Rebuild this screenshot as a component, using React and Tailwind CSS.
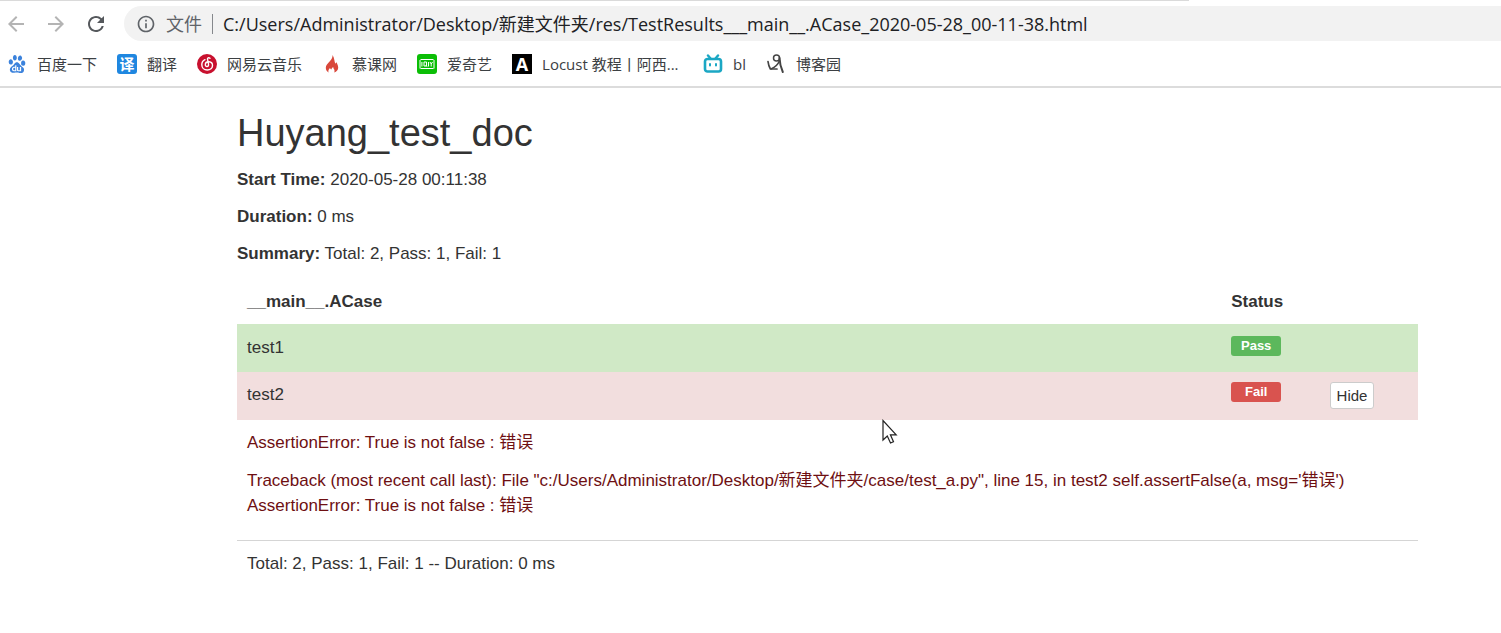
import { useState } from "react";
import { MdArrowBack, MdArrowForward, MdRefresh, MdInfoOutline } from "react-icons/md";
import { SiBaidu } from "react-icons/si";

function TranslateIcon() {
  return (
    <span className="flex size-5 items-center justify-center rounded-[3px] bg-[#1f87e0] text-[15px] leading-5 font-bold text-white">
      译
    </span>
  );
}

function MusicIcon() {
  return (
    <svg viewBox="0 0 20 20" className="size-5" fill="none" stroke="#fff" strokeWidth="1.400" strokeLinecap="round">
      <circle cx="10" cy="10" r="10" fill="#c8102e" stroke="none" />
      <path d="M13 4.300c-1.200-1-2.800-.6-2.500.9l1 5c.3 1.600-.6 2.300-1.500 2.300-1.100 0-1.900-.9-1.700-2.100.2-1.700 1.900-2.700 3.700-2.600 2.200.2 3.600 1.700 3.500 3.800-.1 2.500-2.300 4.400-5.200 4.400-3.200 0-5.500-2.200-5.500-5.200 0-2.300 1.200-4.200 3.200-5.100" />
    </svg>
  );
}

function FlameIcon() {
  return (
    <svg viewBox="0 0 20 20" className="size-5">
      <path d="M10.500 1c.2 2.500-.8 4.200-2.700 6.200C5.600 9.500 3.800 11.300 3.800 13.800c0 2 1 3.700 2.700 4.600-.5-1.800.2-3.200 1.500-4.400.3.800.7 1.200 1.300 1.400.3-1.100 1-1.900 1.900-2.400.1 1.400.9 2 1.200 3 .3.900.1 1.700-.2 2.500 2.600-.8 4-2.700 4-5 0-2.200-1.100-3.600-1.600-5.300-.6.400-1 .9-1.200 1.600C12.300 7.500 12.500 4 10.500 1z" fill="#d9483b" />
    </svg>
  );
}

function VideoIcon() {
  return (
    <svg viewBox="0 0 20 20" className="size-5">
      <rect width="20" height="20" rx="3" fill="#0bbe06" />
      <path d="M3.500 5.500h13M3.500 14.500h13M3 6v8.500M17 6v8.500" stroke="#fff" strokeWidth="1" fill="none" />
      <path d="M4.900 8v4.500M7 8h2.500v4H7zM8.800 11l1.200 1.700M11.500 8v4.500M13 8l1.200 2L15.500 8M14.200 10v2.500" stroke="#fff" strokeWidth="1" fill="none" />
    </svg>
  );
}

function LetterIcon() {
  return (
    <span className="flex size-5 items-center justify-center bg-black text-[18px] leading-5 font-bold text-white">
      A
    </span>
  );
}

function TvIcon() {
  return (
    <svg viewBox="0 0 20 20" className="size-5" fill="none" stroke="#1ba7c4" strokeLinecap="round">
      <rect x="2" y="5" width="16" height="12.500" rx="2.500" strokeWidth="2.600" />
      <path d="M5 1.500l2.500 3M15 1.500l-2.500 3" strokeWidth="2.400" />
      <path d="M7 10v1.600M13 10v1.600" strokeWidth="2" />
    </svg>
  );
}

function BlogIcon() {
  return (
    <svg viewBox="0 0 20 20" className="size-5" fill="none" stroke="#444" strokeLinecap="round">
      <circle cx="10.500" cy="4" r="3" strokeWidth="1.500" />
      <path d="M13.500 4c.2 4.500 1 9 3.300 14" strokeWidth="2" />
      <path d="M13.500 6.500c-1.200 3.500-4 6.500-8.500 8.500" strokeWidth="1.500" />
      <path d="M2 7.500c.3 2.600 1 5.200 2.400 7.500h6.600" strokeWidth="1.700" />
    </svg>
  );
}

const bookmarks = [
  { label: "百度一下", icon: <SiBaidu className="size-[18px] text-[#3b82dc]" /> },
  { label: "翻译", icon: <TranslateIcon /> },
  { label: "网易云音乐", icon: <MusicIcon /> },
  { label: "慕课网", icon: <FlameIcon /> },
  { label: "爱奇艺", icon: <VideoIcon /> },
  { label: "Locust 教程丨阿西...", icon: <LetterIcon /> },
  { label: "bl", icon: <TvIcon /> },
  { label: "博客园", icon: <BlogIcon /> },
];

function BrowserBar() {
  return (
    <header className="border-b-2 border-[#dcdcdc] font-['Open_Sans','Noto_Sans_CJK_SC',sans-serif]">
      <div className="mr-[312px] h-px bg-[#dadada]" />
      <div className="flex items-center pt-[5px]">
        <nav className="flex items-center gap-4 pr-4 pl-1" aria-label="History">
          <button aria-label="Back" className="text-[#b4b4b4]"><MdArrowBack className="size-6" /></button>
          <button aria-label="Forward" className="text-[#b4b4b4]"><MdArrowForward className="size-6" /></button>
          <button aria-label="Reload" className="text-[#55585c]"><MdRefresh className="size-6" /></button>
        </nav>
        <div className="flex h-[35px] flex-1 items-center rounded-l-full bg-[#f2f2f2] pl-3">
          <MdInfoOutline className="size-5 text-[#5f6368]" />
          <label htmlFor="address" className="ml-[10px] text-[18px] leading-6 text-[#5f6368]">文件</label>
          <span className="mx-[10px] h-5 w-px bg-[#85888c]" />
          <input
            id="address"
            className="min-w-0 flex-1 bg-transparent text-[18px] leading-6 text-[#202124] outline-none"
            defaultValue="C:/Users/Administrator/Desktop/新建文件夹/res/TestResults___main__.ACase_2020-05-28_00-11-38.html"
          />
        </div>
      </div>
      <nav className="flex h-[45px] items-center gap-5 pl-[7px]" aria-label="Bookmarks">
        {bookmarks.map((b) => (
          <a
            key={b.label}
            href="#"
            className={`flex items-center gap-[10px] text-[15px] leading-5 whitespace-nowrap text-[#3c4043] ${b.label.endsWith("...") ? "w-[171px]" : ""}`}
          >
            <span className="flex size-5 items-center justify-center">{b.icon}</span>
            {b.label}
          </a>
        ))}
      </nav>
    </header>
  );
}

const summary = [
  ["Start Time:", "2020-05-28 00:11:38"],
  ["Duration:", "0 ms"],
  ["Summary:", "Total: 2, Pass: 1, Fail: 1"],
];

function Report() {
  const [open, setOpen] = useState(true);
  return (
    <main className="pt-6 pr-[83px] pl-[237px] text-[17px] leading-[25px] text-[#333]">
      <h1 className="text-[38px] leading-[42px]">Huyang_test_doc</h1>
      <div className="mt-[13px] flex flex-col gap-3">
        {summary.map(([name, value]) => (
          <p key={name}><strong>{name}</strong> {value}</p>
        ))}
      </div>
      <table className="mt-3 w-full table-fixed border-collapse text-left">
        <thead>
          <tr>
            <th className="w-10/12 px-[10px] pt-[11px] pb-[10px]">__main__.ACase</th>
            <th className="w-1/12 px-[10px] pt-[11px] pb-[10px]">Status</th>
            <th className="w-1/12" aria-label="Details" />
          </tr>
        </thead>
        <tbody className="align-top">
          <tr className="h-12 bg-[#d0e9c6]">
            <td className="p-[10px] pt-[11px]">test1</td>
            <td className="p-[10px] pt-3">
              <span className="block h-5 w-[50px] rounded-[3px] bg-[#5cb85c] text-center text-[13px] leading-[19px] font-bold text-white">Pass</span>
            </td>
            <td />
          </tr>
          <tr className="h-12 bg-[#f2dede]">
            <td className="p-[10px]">test2</td>
            <td className="p-[10px]">
              <span className="block h-5 w-[50px] rounded-[3px] bg-[#d9534f] text-center text-[13px] leading-[19px] font-bold text-white">Fail</span>
            </td>
            <td className="p-[10px]">
              <button
                onClick={() => setOpen(!open)}
                className="block h-[27px] rounded-[3px] border border-[#ccc] bg-white px-[6px] text-[15px] leading-[25px]"
              >
                {open ? "Hide" : "View"}
              </button>
            </td>
          </tr>
          {open && (
            <tr className="text-[#6e0f12]">
              <td colSpan={3} className="px-[10px] pt-[10px] pb-[22px]">
                <p className="mb-[13px]">AssertionError: True is not false : 错误</p>
                <p>
                  Traceback (most recent call last): File "c:/Users/Administrator/Desktop/新建文件夹/case/test_a.py", line 15, in test2 self.assertFalse(a, msg='错误')
                  <br />
                  AssertionError: True is not false : 错误
                </p>
              </td>
            </tr>
          )}
        </tbody>
        <tfoot>
          <tr className="border-t border-[#d5d5d5]">
            <td colSpan={3} className="p-[10px]">Total: 2, Pass: 1, Fail: 1 -- Duration: 0 ms</td>
          </tr>
        </tfoot>
      </table>
    </main>
  );
}

export default function App() {
  return (
    <div className="relative min-h-screen bg-white font-['Liberation_Sans','Noto_Sans_CJK_SC',sans-serif]">
      <BrowserBar />
      <Report />
      <svg viewBox="0 0 16 26" className="pointer-events-none absolute top-[419px] left-[882px] h-[26px] w-4" aria-hidden="true">
        <path d="M1 1.500v19.500l4.300-4 3.200 7 3-1.300-3.100-6.900h5.800z" fill="#fff" stroke="#222" strokeWidth="1.200" />
      </svg>
    </div>
  );
}
